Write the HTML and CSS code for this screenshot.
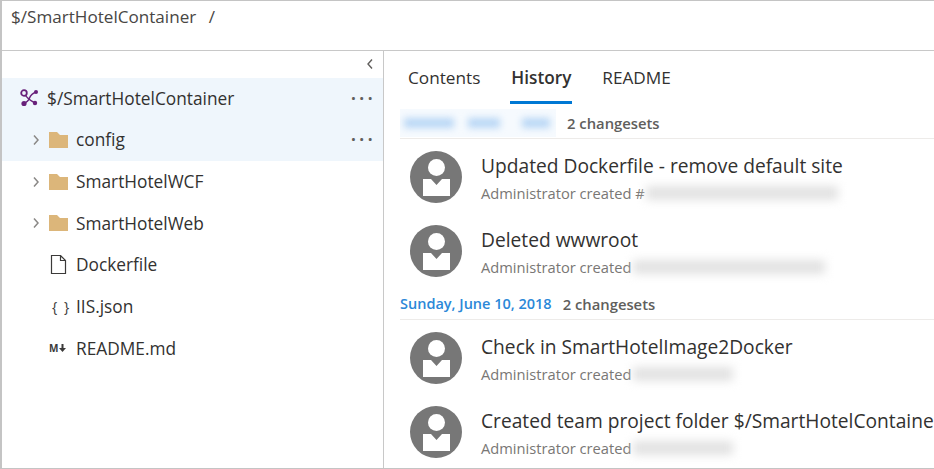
FILE: index.html
```html
<!DOCTYPE html>
<html>
<head>
  <title>Repos - Files</title>
  <link rel="stylesheet" href="styles.css">
</head>
<body>
  <div class="frame">
    <header class="path-bar">
      <span class="path-name">$/SmartHotelContainer</span>
      <span class="path-sep">/</span>
    </header>
    <div class="panes">
      <aside class="tree">
        <div class="collapse">
          <svg width="8" height="12" viewBox="0 0 8 12"><path d="M6 1.5 2 6l4 4.500" fill="none" stroke="#605e5c" stroke-width="1.400"/></svg>
        </div>
        <div class="tree-row selected">
          <span class="repo-icon">
            <svg width="20" height="18" viewBox="0 0 20 18">
              <path d="M5 4q3 6 11 10M5 14q4-1 5.500-5T17 3" fill="none" stroke="#68217a" stroke-width="1.500"/>
              <circle cx="5" cy="4" r="2.800" fill="#eff6fc" stroke="#68217a" stroke-width="1.800"/>
              <circle cx="5" cy="14.500" r="2.600" fill="#68217a"/>
              <circle cx="17" cy="3" r="2" fill="#68217a"/>
              <circle cx="16" cy="14" r="2.200" fill="#68217a"/>
            </svg>
          </span>
          <span class="name">$/SmartHotelContainer</span>
          <span class="more">&middot;&middot;&middot;</span>
        </div>
        <div class="tree-row selected child">
          <span class="chevron"><svg width="8" height="12" viewBox="0 0 8 12"><path d="M2 1.500 6 6l-4 4.500" fill="none" stroke="#8a8886" stroke-width="1.500"/></svg></span>
          <span class="file-icon"><svg width="19" height="16" viewBox="0 0 19 16"><path d="M0 0h8l3 3h8v13H0z" fill="#dcb67a"/></svg></span>
          <span class="name">config</span>
          <span class="more">&middot;&middot;&middot;</span>
        </div>
        <div class="tree-row child">
          <span class="chevron"><svg width="8" height="12" viewBox="0 0 8 12"><path d="M2 1.500 6 6l-4 4.500" fill="none" stroke="#8a8886" stroke-width="1.500"/></svg></span>
          <span class="file-icon"><svg width="19" height="16" viewBox="0 0 19 16"><path d="M0 0h8l3 3h8v13H0z" fill="#dcb67a"/></svg></span>
          <span class="name">SmartHotelWCF</span>
        </div>
        <div class="tree-row child">
          <span class="chevron"><svg width="8" height="12" viewBox="0 0 8 12"><path d="M2 1.500 6 6l-4 4.500" fill="none" stroke="#8a8886" stroke-width="1.500"/></svg></span>
          <span class="file-icon"><svg width="19" height="16" viewBox="0 0 19 16"><path d="M0 0h8l3 3h8v13H0z" fill="#dcb67a"/></svg></span>
          <span class="name">SmartHotelWeb</span>
        </div>
        <div class="tree-row child">
          <span class="chevron"></span>
          <span class="file-icon"><svg width="19" height="19" viewBox="0 0 19 19"><path d="M2.500.500h9l5 5v13h-14zM11.500.500v5h5" fill="none" stroke="#3b3a39" stroke-width="1.200"/></svg></span>
          <span class="name">Dockerfile</span>
        </div>
        <div class="tree-row child">
          <span class="chevron"></span>
          <span class="file-icon braces">{ }</span>
          <span class="name">IIS.json</span>
        </div>
        <div class="tree-row child">
          <span class="chevron"></span>
          <span class="file-icon markdown">M<svg width="7" height="8" viewBox="0 0 7 8"><path d="M2.500 0h2v4H7L3.500 8 0 4h2.500z" fill="#3b3a39"/></svg></span>
          <span class="name">README.md</span>
        </div>
      </aside>
      <main class="detail">
        <nav class="tabs">
          <a class="tab">Contents</a>
          <a class="tab active">History</a>
          <a class="tab">README</a>
        </nav>
        <div class="group-head first">
          <span class="date-hidden">
            <span class="smudge-blue long"></span>
            <span class="smudge-blue mid"></span>
            <span class="smudge-blue tiny"></span>
          </span>
          <span class="count">2 changesets</span>
        </div>
        <div class="commit">
          <svg class="avatar" width="52" height="52" viewBox="0 0 52 52"><circle cx="26" cy="26" r="26" fill="#777"/><circle cx="26.500" cy="16.500" r="8.500" fill="#fff"/><path d="M13 28h8l5.500 6 5.500-6h8v17H13z" fill="#fff"/></svg>
          <div class="commit-text">
            <div class="commit-title">Updated Dockerfile - remove default site</div>
            <div class="commit-sub">Administrator created #<span class="smudge wide"></span></div>
          </div>
        </div>
        <div class="commit">
          <svg class="avatar" width="52" height="52" viewBox="0 0 52 52"><circle cx="26" cy="26" r="26" fill="#777"/><circle cx="26.500" cy="16.500" r="8.500" fill="#fff"/><path d="M13 28h8l5.500 6 5.500-6h8v17H13z" fill="#fff"/></svg>
          <div class="commit-text">
            <div class="commit-title">Deleted wwwroot</div>
            <div class="commit-sub">Administrator created <span class="smudge wide"></span></div>
          </div>
        </div>
        <div class="group-head">
          <span class="date">Sunday, June 10, 2018</span>
          <span class="count">2 changesets</span>
        </div>
        <div class="commit">
          <svg class="avatar" width="52" height="52" viewBox="0 0 52 52"><circle cx="26" cy="26" r="26" fill="#777"/><circle cx="26.500" cy="16.500" r="8.500" fill="#fff"/><path d="M13 28h8l5.500 6 5.500-6h8v17H13z" fill="#fff"/></svg>
          <div class="commit-text">
            <div class="commit-title">Check in SmartHotelImage2Docker</div>
            <div class="commit-sub">Administrator created <span class="smudge short"></span></div>
          </div>
        </div>
        <div class="commit">
          <svg class="avatar" width="52" height="52" viewBox="0 0 52 52"><circle cx="26" cy="26" r="26" fill="#777"/><circle cx="26.500" cy="16.500" r="8.500" fill="#fff"/><path d="M13 28h8l5.500 6 5.500-6h8v17H13z" fill="#fff"/></svg>
          <div class="commit-text">
            <div class="commit-title">Created team project folder $/SmartHotelContainer</div>
            <div class="commit-sub">Administrator created <span class="smudge short"></span></div>
          </div>
        </div>
      </main>
    </div>
  </div>
</body>
</html>
```

FILE: styles.css
```css
body {
  margin: 0;
  font-family: "Open Sans", "Noto Sans", sans-serif;
  color: #323130;
  background-color: white;
}
.frame {
  box-sizing: border-box;
  width: 934px;
  height: 469px;
  overflow: hidden;
  border-top: 1px solid #c4c4c4;
  border-bottom: 1px solid #c4c4c4;
  border-left: 2px solid #c4c4c4;
}
.path-bar {
  box-sizing: border-box;
  height: 50px;
  padding: 4px 0 0 9px;
  border-bottom: 1px solid #c8c8c8;
  font-size: 17.100px;
  line-height: 24px;
  color: #484644;
}
.path-sep {
  margin-left: 8px;
}
.panes {
  display: flex;
  height: 417px;
}
.tree {
  box-sizing: border-box;
  flex: none;
  width: 382px;
  border-right: 1px solid #c8c8c8;
}
.collapse {
  display: flex;
  justify-content: flex-end;
  align-items: center;
  height: 26.500px;
  padding-right: 9px;
}
.tree-row {
  display: flex;
  align-items: center;
  height: 41.670px;
  padding-left: 17px;
  font-size: 17.300px;
}
.tree-row.child {
  padding-left: 28px;
}
.selected {
  background-color: #eff6fc;
}
.repo-icon {
  width: 28px;
  display: flex;
}
.chevron {
  box-sizing: border-box;
  width: 19px;
  padding-left: 2px;
  display: flex;
}
.file-icon {
  width: 27px;
  display: flex;
  align-items: center;
}
.braces {
  box-sizing: border-box;
  padding-left: 3px;
  font-size: 14px;
  word-spacing: 3px;
  color: #3b3a39;
}
.markdown {
  font-size: 10px;
  font-weight: 700;
  gap: 1px;
  color: #3b3a39;
}
.name {
  flex: 1;
}
.more {
  margin-right: 7px;
  font-size: 17px;
  font-weight: 700;
  letter-spacing: 3.500px;
  color: #605e5c;
}
.detail {
  flex: 1;
  min-width: 0;
  overflow: hidden;
}
.tabs {
  display: flex;
  gap: 30px;
  height: 53px;
  padding-left: 24px;
  box-sizing: border-box;
  font-size: 17.200px;
}
.tab {
  box-sizing: border-box;
  height: 53px;
  padding-top: 15px;
  line-height: 24px;
}
.tab.active {
  font-weight: 600;
  border-bottom: 3px solid #0078d4;
  padding-left: 1px;
  padding-right: 1px;
}
.group-head {
  display: flex;
  align-items: center;
  gap: 11px;
  box-sizing: border-box;
  height: 32px;
  margin-left: 16px;
  margin-bottom: 1px;
  border-bottom: 1px solid #edebe9;
  font-weight: 600;
}
.group-head.first {
  height: 35px;
  padding-top: 3px;
}
.date {
  font-size: 14.500px;
  color: #2b88d8;
}
.count {
  font-size: 14.800px;
  color: #605e5c;
}
.date-hidden {
  display: flex;
  align-items: center;
  gap: 14px;
  width: 156px;
  height: 28px;
  overflow: hidden;
  background-color: #f6fafe;
}
.smudge-blue {
  height: 10px;
  background-color: #b9d7f5;
  filter: blur(3.500px);
}
.long {
  width: 50px;
  margin-left: 4px;
}
.mid {
  width: 32px;
}
.tiny {
  width: 28px;
  margin-left: 8px;
}
.commit {
  display: flex;
  align-items: center;
  height: 74px;
  padding-left: 26px;
  white-space: nowrap;
}
.avatar {
  flex: none;
  margin-right: 19px;
}
.commit-text {
  padding-top: 1px;
}
.commit-title {
  font-size: 19.200px;
  line-height: 24px;
}
.commit-sub {
  display: flex;
  align-items: center;
  gap: 1px;
  margin-top: 6px;
  font-size: 14.700px;
  line-height: 18px;
  color: #797775;
}
.smudge {
  height: 14px;
  background-color: #e2e2e2;
  filter: blur(5px);
}
.wide {
  width: 192px;
}
.short {
  width: 100px;
}
```
